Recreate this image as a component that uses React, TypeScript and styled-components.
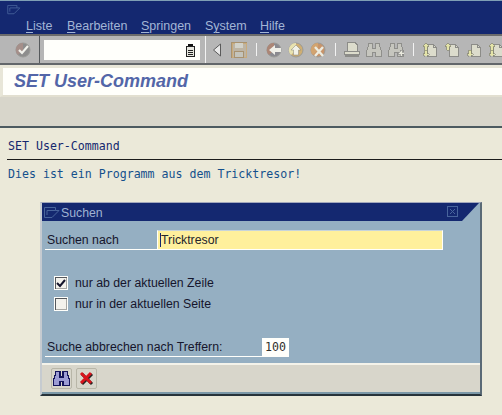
import React from 'react'
import styled, { createGlobalStyle } from 'styled-components'

const GlobalStyle = createGlobalStyle`
html, body {
    margin: 0;
    padding: 0;
    background: #ebe9d9;
    overflow: hidden;
}
`

const Page = styled.div`
    position: relative;
    width: 502px;
    height: 415px;
    overflow: hidden;
    background: #ebe9d9;
    font-family: "Liberation Sans", Arial, sans-serif;
`

const MenuBar = styled.div`
    height: 34px;
    box-sizing: border-box;
    border-top: 1px solid #7f9fb5;
    background: #142870;
    display: flex;
    flex-direction: column;
    padding: 4px 0 0 6px;
`

const MenuList = styled.div`
    display: flex;
    margin: 3px 0 0 20px;
`

const MenuItem = styled.span<{ $w: number }>`
    width: ${(p) => p.$w}px;
    color: #a3b6d6;
    font-size: 12.5px;
    line-height: 16px;
    u {
        text-underline-offset: 2px;
    }
`

const Toolbar = styled.div`
    height: 31px;
    box-sizing: border-box;
    border-top: 2px solid #6c6c6c;
    border-bottom: 2px solid #62666a;
    background: #b6b6b6;
    display: flex;
    align-items: center;
`

const ToolSlot = styled.div<{ $w?: number; $pl?: number }>`
    width: ${(p) => p.$w ?? 22}px;
    padding-left: ${(p) => p.$pl ?? 0}px;
    box-sizing: border-box;
    flex: none;
    display: flex;
    align-items: center;
    justify-content: center;
`

const Divider = styled.div`
    width: 1px;
    height: 13px;
    background: #f2f2f2;
`

const CommandCell = styled.div`
    width: 167px;
    height: 100%;
    flex: none;
    box-sizing: border-box;
    border-left: 1px solid #55595c;
    border-right: 1px solid #f2f2f2;
    padding: 4px 0 0 4px;
`

const CommandField = styled.div`
    width: 156px;
    height: 20px;
    background: #fffffb;
    display: flex;
    align-items: center;
    justify-content: flex-end;
    padding-right: 5px;
    box-sizing: border-box;
`

const TitleBand = styled.div`
    height: 32px;
    box-sizing: border-box;
    background: #fffffb;
    border-top: 3px solid #e8e6d8;
    border-left: 3px solid #e8e6d8;
    border-bottom: 2px solid #e2dfd0;
    padding-left: 11px;
    color: #5366a8;
    font-size: 18px;
    font-weight: bold;
    font-style: italic;
    line-height: 27px;
`

const AppToolbar = styled.div`
    height: 29px;
    background: #d8d6cb;
    border-bottom: 2px solid #4c5a60;
`

const ListArea = styled.div`
    padding: 9px 0 0 7px;
    font-family: "DejaVu Sans Mono", monospace;
    font-size: 11.6px;
    line-height: 18px;
    color: #14286e;
`

const ListHeader = styled.div`
    height: 23px;
    padding-left: 1px;
    box-sizing: border-box;
    border-bottom: 1px solid #1c1c1c;
    margin-bottom: 5px;
`

const ListLine = styled.div`
    padding-left: 1px;
    color: #14508c;
`

const Dialog = styled.div`
    position: absolute;
    left: 40px;
    top: 202px;
    width: 442px;
    height: 194px;
    box-sizing: border-box;
    background: #95afc2;
    border-top: 1px solid #a3a8bc;
    border-left: 2px solid #c6cbd0;
    border-right: 2px solid #5a6a76;
    border-bottom: 2px solid #27333a;
    display: flex;
    flex-direction: column;
`

const DialogTitle = styled.div`
    height: 18px;
    flex: none;
    margin-right: 1px;
    background: #142870;
    clip-path: polygon(0 0, 100% 0, calc(100% - 17px) 100%, 0 100%);
    display: flex;
    align-items: center;
    padding: 1px 0 0 2px;
    box-sizing: border-box;
    color: #9fb2d2;
    font-size: 12.3px;
    position: relative;
`

const TitleLabel = styled.span`
    margin-left: 1px;
`

const CloseBox = styled.div`
    position: absolute;
    right: 21px;
    top: 3px;
    width: 9px;
    height: 9px;
    border: 1px solid #48649c;
    display: flex;
    align-items: center;
    justify-content: center;
`

const DialogBody = styled.div`
    flex: 1;
    min-height: 0;
    padding: 9px 0 0 3px;
`

const FieldRow = styled.div`
    display: flex;
    align-items: flex-end;
    height: 20px;
`

const FieldLabel = styled.div<{ $w: number }>`
    width: ${(p) => p.$w}px;
    height: 100%;
    box-sizing: border-box;
    flex: none;
    border-bottom: 1px solid #fffffb;
    padding-left: 2px;
    color: #15152c;
    font-size: 12.3px;
    line-height: 20px;
`

const SearchInput = styled.div`
    width: 286px;
    height: 20px;
    box-sizing: border-box;
    background: #fff09c;
    border: 1px solid #fffffb;
    border-top-color: #c8d4da;
    padding-left: 2px;
    color: #25252c;
    font-size: 12.3px;
    line-height: 18px;
    display: flex;
    align-items: center;
`

const Caret = styled.span`
    width: 1px;
    height: 14px;
    background: #14286e;
`

const CountInput = styled.div`
    width: 27px;
    height: 19px;
    box-sizing: border-box;
    background: #fffffb;
    padding-left: 3px;
    color: #30302c;
    font-family: "DejaVu Sans Mono", monospace;
    font-size: 11.6px;
    line-height: 18px;
`

const CheckGroup = styled.div`
    margin: 26px 0 26px 9px;
    display: flex;
    flex-direction: column;
    gap: 7px;
`

const CheckRow = styled.label`
    display: flex;
    align-items: center;
    height: 14px;
    color: #15152c;
    font-size: 12.3px;
`

const CheckBox = styled.span`
    width: 14px;
    height: 14px;
    box-sizing: border-box;
    flex: none;
    background: #f3f2ec;
    border: 1px solid #fffffb;
    box-shadow: inset 1px 1px 0 #55585c, inset -1px -1px 0 #a8a8a4;
    margin-right: 7px;
    display: flex;
    align-items: center;
    justify-content: center;
`

const DialogFooter = styled.div`
    height: 31px;
    flex: none;
    box-sizing: border-box;
    background: #d8d6cb;
    border-top: 2px solid #f4f3ea;
    border-bottom: 2px solid #7b98a8;
    display: flex;
    align-items: center;
    gap: 4px;
    padding-left: 9px;
`

const FooterButton = styled.div`
    width: 21px;
    height: 21px;
    box-sizing: border-box;
    border: 1px solid #b8b6a8;
    border-radius: 2px;
    display: flex;
    align-items: center;
    justify-content: center;
`

const Ico: React.FC<{ children: React.ReactNode; size?: number }> = ({ children, size = 16 }) => (
    <svg width={size} height={size} viewBox="0 0 16 16" shapeRendering="crispEdges" style={{ display: 'block' }}>
        {children}
    </svg>
)

// window glyph used in both title bars
const WindowIcon: React.FC<{ color: string }> = ({ color }) => (
    <svg width="16" height="12" viewBox="0 0 16 12" style={{ display: 'block' }}>
        <path d="M0.5 0.5H11.5V3.5H15L8 10.5H0.5ZM3 3.5H11.5M3 3.5V8" fill="none" stroke={color} />
    </svg>
)

const Binoculars: React.FC<{ fill: string; stroke: string; plus?: boolean }> = ({ fill, stroke, plus }) => (
    <Ico>
        <path d="M2.5 1.5H6.5V6.5H9.5V1.5H13.5V4L15.5 9V14.5H9.5V10.5H6.5V14.5H0.5V9L2.5 4Z" fill={fill} stroke={stroke} />
        {plus && <path d="M10 10H12V8H14V10H16V12H14V14H12V12H10Z" fill="#e8e8dc" stroke="#808080" strokeWidth="0.6" />}
    </Ico>
)

const RoundIcon: React.FC<{ colorA: string; colorB: string; children: React.ReactNode }> = ({ colorA, colorB, children }) => (
    <Ico>
        <circle cx="8" cy="8" r="7" fill={colorA} stroke="#9a9a96" shapeRendering="auto" />
        <path d="M8 1A7 7 0 0 0 3 13L8 8Z" fill={colorB} shapeRendering="auto" />
        {children}
    </Ico>
)

const PageIcon: React.FC<{ arrows: 'both' | 'up' | 'down' }> = ({ arrows }) => (
    <Ico>
        <path d="M5.5 2.5H11.5L14.5 5.5V14.5H5.5Z" fill="#dcdccc" stroke="#8c8c88" />
        <path d="M11.5 2.5V5.5H14.5" fill="none" stroke="#8c8c88" />
        {(arrows === 'both' || arrows === 'up') && (
            <path d="M4 1L7 4.5H5.2V8H2.8V4.5H1Z" fill="#e4e4a8" stroke="#8a8a70" strokeWidth="0.7" />
        )}
        {(arrows === 'both' || arrows === 'down') && (
            <path d="M4 15L7 11.5H5.2V8H2.8V11.5H1Z" fill="#e4e4a8" stroke="#8a8a70" strokeWidth="0.7" />
        )}
    </Ico>
)

const menuItems = [
    { letter: 'L', rest: 'iste', w: 41 },
    { letter: 'B', rest: 'earbeiten', w: 74 },
    { letter: 'S', rest: 'pringen', w: 64 },
    { letter: 'S', rest: 'ystem', w: 55, underlineSecond: true },
    { letter: 'H', rest: 'ilfe', w: 40 },
]

const App: React.FC = () => {
    return (
        <Page>
            <GlobalStyle />
            <MenuBar>
                <WindowIcon color="#48649c" />
                <MenuList>
                    {menuItems.map((m) => (
                        <MenuItem key={m.rest} $w={m.w}>
                            {m.underlineSecond ? (
                                <>S<u>y</u>stem</>
                            ) : (
                                <><u>{m.letter}</u>{m.rest}</>
                            )}
                        </MenuItem>
                    ))}
                </MenuList>
            </MenuBar>
            <Toolbar>
                <ToolSlot $w={39} $pl={6}>
                    <RoundIcon colorA="#8d8d8d" colorB="#a58f8a">
                        <path d="M4 8L7 11L13 4" fill="none" stroke="#f2f2ec" strokeWidth="2.2" shapeRendering="auto" />
                    </RoundIcon>
                </ToolSlot>
                <CommandCell>
                    <CommandField>
                        <svg width="9" height="13" viewBox="0 0 9 13" shapeRendering="crispEdges">
                            <rect x="2" y="0" width="5" height="3" fill="#111" />
                            <rect x="0.5" y="2.5" width="8" height="10" fill="#e8e8e0" stroke="#222" />
                            <path d="M2 6H7M2 8H7M2 10H7" stroke="#222" />
                        </svg>
                    </CommandField>
                </CommandCell>
                <ToolSlot>
                    <svg width="10" height="14" viewBox="0 0 10 14">
                        <path d="M8.5 1V13L1.5 7Z" fill="#e8e8e8" stroke="#5a5a5a" />
                    </svg>
                </ToolSlot>
                <ToolSlot>
                    <Ico>
                        <rect x="0.5" y="0.5" width="15" height="15" fill="#bdb4a4" stroke="#a89270" />
                        <rect x="1" y="1" width="14" height="14" fill="none" stroke="#c9ab7c" />
                        <rect x="4" y="1" width="8" height="5" fill="#d2d2ca" />
                        <rect x="3.5" y="9.5" width="9" height="6" fill="#c4c4bc" stroke="#a89270" />
                    </Ico>
                </ToolSlot>
                <ToolSlot $w={13}><Divider /></ToolSlot>
                <ToolSlot>
                    <RoundIcon colorA="#8a8a90" colorB="#ac8676">
                        <path d="M15 6H9V3L3 8L9 13V10H15Z" fill="#efefe8" shapeRendering="auto" />
                    </RoundIcon>
                </ToolSlot>
                <ToolSlot>
                    <RoundIcon colorA="#cfae72" colorB="#e8e2b0">
                        <path d="M8 3L13 8H10.5V13H5.5V8H3Z" fill="#f2f2e8" stroke="#85857a" strokeWidth="0.5" shapeRendering="auto" />
                    </RoundIcon>
                </ToolSlot>
                <ToolSlot>
                    <RoundIcon colorA="#c8946a" colorB="#d2a470">
                        <path d="M5 5L13 14M13 5L5 14" stroke="#ecece0" strokeWidth="2.4" fill="none" shapeRendering="auto" />
                    </RoundIcon>
                </ToolSlot>
                <ToolSlot $w={12}><Divider /></ToolSlot>
                <ToolSlot>
                    <Ico>
                        <path d="M3.5 0.5H11L13.5 3V9.5H3.5Z" fill="#dcdccc" stroke="#8c8c88" />
                        <rect x="0.5" y="9.5" width="15" height="3" fill="#dcdccc" stroke="#8c8c88" />
                        <rect x="1" y="13" width="14" height="2" fill="#8c8c88" />
                    </Ico>
                </ToolSlot>
                <ToolSlot><Binoculars fill="#c6c6be" stroke="#8f8f8b" /></ToolSlot>
                <ToolSlot><Binoculars fill="#c6c6be" stroke="#8f8f8b" plus /></ToolSlot>
                <ToolSlot $w={12}><Divider /></ToolSlot>
                <ToolSlot><PageIcon arrows="both" /></ToolSlot>
                <ToolSlot><PageIcon arrows="up" /></ToolSlot>
                <ToolSlot><PageIcon arrows="down" /></ToolSlot>
                <ToolSlot><PageIcon arrows="both" /></ToolSlot>
            </Toolbar>
            <TitleBand>SET User-Command</TitleBand>
            <AppToolbar />
            <ListArea>
                <ListHeader>SET User-Command</ListHeader>
                <ListLine>Dies ist ein Programm aus dem Tricktresor!</ListLine>
            </ListArea>
            <Dialog>
                <DialogTitle>
                    <WindowIcon color="#48649c" />
                    <TitleLabel>Suchen</TitleLabel>
                    <CloseBox>
                        <svg width="7" height="7" viewBox="0 0 7 7">
                            <path d="M1 1L6 6M6 1L1 6" stroke="#48649c" />
                        </svg>
                    </CloseBox>
                </DialogTitle>
                <DialogBody>
                    <FieldRow>
                        <FieldLabel $w={112}>Suchen nach</FieldLabel>
                        <SearchInput><Caret />Tricktresor</SearchInput>
                    </FieldRow>
                    <CheckGroup>
                        <CheckRow>
                            <CheckBox>
                                <svg width="10" height="9" viewBox="0 0 10 9">
                                    <path d="M1 4L4 7L9 1" fill="none" stroke="#15152c" strokeWidth="2" />
                                </svg>
                            </CheckBox>
                            nur ab der aktuellen Zeile
                        </CheckRow>
                        <CheckRow>
                            <CheckBox />
                            nur in der aktuellen Seite
                        </CheckRow>
                    </CheckGroup>
                    <FieldRow>
                        <FieldLabel $w={217}>Suche abbrechen nach Treffern:</FieldLabel>
                        <CountInput>100</CountInput>
                    </FieldRow>
                </DialogBody>
                <DialogFooter>
                    <FooterButton>
                        <Ico size={17}>
                            <path d="M2.5 1.5H6.5V6.5H9.5V1.5H13.5V4L15.5 9V14.5H9.5V10.5H6.5V14.5H0.5V9L2.5 4Z" fill="#9c9cd4" stroke="#14145c" strokeWidth="1.2" />
                        </Ico>
                    </FooterButton>
                    <FooterButton>
                        <svg width="15" height="15" viewBox="0 0 15 15">
                            <path d="M3 3L13 13M13 3L3 13" stroke="#222" strokeWidth="3" />
                            <path d="M2 2L12 12M12 2L2 12" stroke="#d8141c" strokeWidth="3" />
                        </svg>
                    </FooterButton>
                </DialogFooter>
            </Dialog>
        </Page>
    )
}

export default App
